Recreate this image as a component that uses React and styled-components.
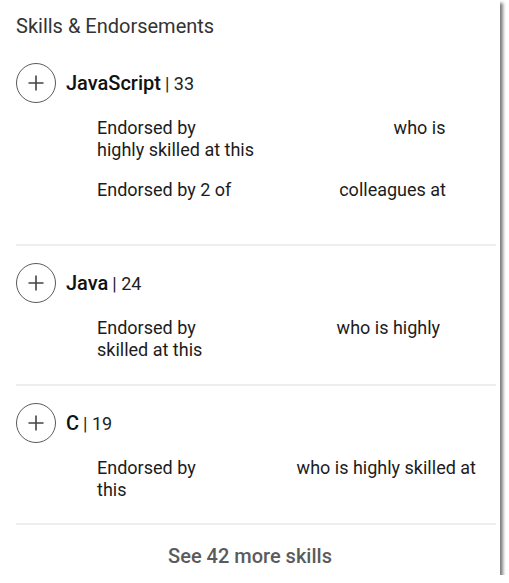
import React from "react";
import styled, { createGlobalStyle } from "styled-components";

const GlobalStyle = createGlobalStyle`
  body {
    margin: 0;
    background: #ffffff;
    font-family: Roboto, "Liberation Sans", Arial, sans-serif;
  }
`;

const Card = styled.div`
  width: 500px;
  height: 575px;
  box-sizing: border-box;
  background: #fff;
  box-shadow: 3px 3px 3px rgba(0, 0, 0, 0.5);
  display: flex;
  flex-direction: column;
`;

const Heading = styled.h2`
  margin: 0;
  padding: 14px 16px 0;
  font-size: 20px;
  line-height: 24px;
  font-weight: 400;
  color: #333;
`;

const List = styled.div`
  margin-top: 8px;
`;

const Skill = styled.div`
  margin: 0 4px 0 16px;
  padding: 17px 0 ${(p) => p.$bottom}px;
  border-bottom: 2px solid #eeeeee;
`;

const SkillHeader = styled.div`
  display: flex;
  align-items: center;
  gap: 10px;
`;

const AddButton = styled.button`
  width: 40px;
  height: 40px;
  padding: 0;
  border-radius: 50%;
  border: 1.5px solid #5a5a5a;
  background: #fff;
  display: flex;
  align-items: center;
  justify-content: center;
  color: #444;
  flex-shrink: 0;
`;

const SkillName = styled.span`
  font-size: 20px;
  font-weight: 500;
  color: #111;
`;

const Count = styled.span`
  font-size: 18px;
  font-weight: 400;
  color: #222;
  margin-left: 4px;
`;

const Endorsements = styled.div`
  margin-top: 14px;
  padding-left: 81px;
  width: 387px;
  display: flex;
  flex-direction: column;
  gap: 18px;
`;

const Endorsement = styled.p`
  margin: 0;
  font-size: 18px;
  line-height: 22px;
  color: #1c1c1c;
  min-height: ${(p) => (p.$tall ? 44 : 0)}px;
`;

const Hidden = styled.span`
  display: inline-block;
  width: ${(p) => p.$w}px;
`;

const SeeMore = styled.div`
  flex: 1;
  padding-top: 12px;
  display: flex;
  align-items: center;
  justify-content: center;
  font-size: 20px;
  font-weight: 500;
  color: #5b5b5b;
`;

const PlusIcon = () => (
  <svg width="18" height="18" viewBox="0 0 18 18" fill="none">
    <path d="M9 1.5V16.5M1.5 9H16.5" stroke="currentColor" strokeWidth="1.6" />
  </svg>
);

const skills = [
  {
    name: "JavaScript",
    count: 33,
    bottom: 21,
    lines: [
      { before: "Endorsed by", gap: 189, after: "who is highly skilled at this", tall: true },
      { before: "Endorsed by 2 of", gap: 99, after: "colleagues at", tall: true },
    ],
  },
  {
    name: "Java",
    count: 24,
    bottom: 23,
    lines: [{ before: "Endorsed by", gap: 132, after: "who is highly skilled at this" }],
  },
  {
    name: "C",
    count: 19,
    bottom: 22,
    lines: [{ before: "Endorsed by", gap: 92, after: "who is highly skilled at this" }],
  },
];

export default function App() {
  return (
    <>
      <GlobalStyle />
      <Card>
        <Heading>Skills &amp; Endorsements</Heading>
        <List>
          {skills.map((s) => (
            <Skill key={s.name} $bottom={s.bottom}>
              <SkillHeader>
                <AddButton aria-label={`Endorse ${s.name}`}>
                  <PlusIcon />
                </AddButton>
                <div>
                  <SkillName>{s.name}</SkillName>
                  <Count>| {s.count}</Count>
                </div>
              </SkillHeader>
              <Endorsements>
                {s.lines.map((l, i) => (
                  <Endorsement key={i} $tall={l.tall}>
                    {l.before} <Hidden $w={l.gap} /> {l.after}
                  </Endorsement>
                ))}
              </Endorsements>
            </Skill>
          ))}
        </List>
        <SeeMore>See 42 more skills</SeeMore>
      </Card>
    </>
  );
}
